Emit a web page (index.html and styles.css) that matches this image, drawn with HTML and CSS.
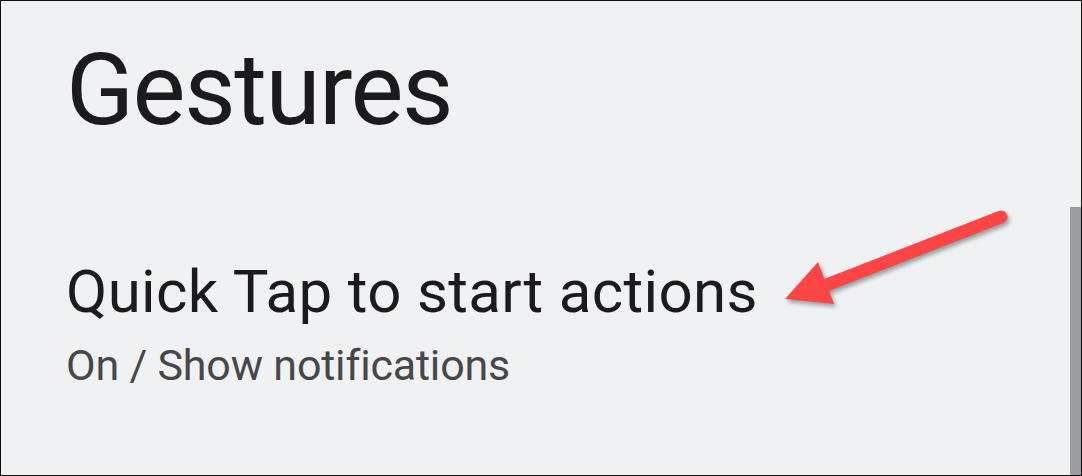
FILE: index.html
```html
<!DOCTYPE html>
<html lang="en">
<head>
<meta charset="utf-8">
<title>Gestures</title>
<link rel="stylesheet" href="styles.css">
</head>
<body>
<div class="screen">
  <main class="content">
    <h1 class="title">Gestures</h1>
    <div class="setting">
      <div class="setting-name">Quick Tap to start actions</div>
      <div class="setting-summary">On / Show notifications</div>
    </div>
  </main>
  <div class="scrollbar"></div>
  <svg class="annotation" width="1082" height="476" viewBox="0 0 1082 476" aria-hidden="true">
    <g class="arrow">
      <line x1="1001" y1="217" x2="824" y2="286" stroke="#fe4546" stroke-width="13" stroke-linecap="round"/>
      <polygon points="785,299 818,262 834,304" fill="#fe4546"/>
    </g>
  </svg>
</div>
</body>
</html>
```

FILE: styles.css
```css
html, body {
  margin: 0;
  padding: 0;
}
body {
  width: 1082px;
  height: 476px;
  overflow: hidden;
  font-family: Roboto, "Liberation Sans", sans-serif;
}
.screen {
  position: relative;
  width: 1082px;
  height: 476px;
  box-sizing: border-box;
  border: 1px solid #111;
  background: #f0f1f3;
  overflow: hidden;
}
.content {
  display: flex;
  flex-direction: column;
  padding: 39px 0 0 65px;
}
.title {
  margin: 0;
  font-size: 100px;
  line-height: 100px;
  font-weight: 400;
  letter-spacing: -1.5px;
  color: #1b1b1d;
}
.setting {
  display: flex;
  flex-direction: column;
  margin-top: 122px;
  gap: 22px;
}
.setting-name {
  font-size: 60px;
  line-height: 60px;
  letter-spacing: 0.36px;
  color: #1b1b1d;
}
.setting-summary {
  font-size: 43px;
  line-height: 43px;
  letter-spacing: -0.18px;
  color: #46474b;
}
.scrollbar {
  position: absolute;
  right: 0;
  top: 206px;
  bottom: 0;
  width: 11px;
  background: #9b9ca0;
}
.annotation {
  position: absolute;
  left: -1px;
  top: -1px;
  pointer-events: none;
}
.arrow {
  filter: drop-shadow(2px 3px 2px rgba(0, 0, 0, 0.35));
}
```
